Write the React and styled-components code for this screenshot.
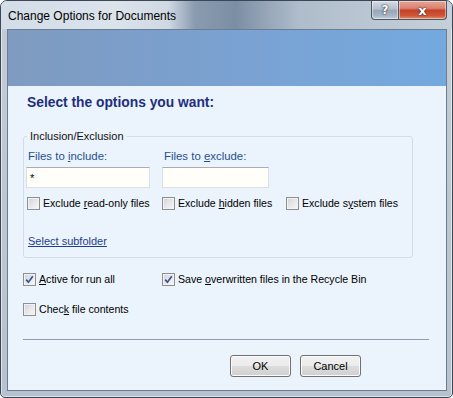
import React from 'react'
import styled, { createGlobalStyle } from 'styled-components'

const GlobalStyle = createGlobalStyle`
  html, body {
    margin: 0;
    padding: 0;
    background: #ffffff;
  }
  body {
    font-family: "Liberation Sans", Arial, sans-serif;
    font-size: 11px;
    color: #000;
  }
`

const Window = styled.div`
  box-sizing: border-box;
  width: 453px;
  height: 398px;
  display: flex;
  flex-direction: column;
  border: 1px solid #3b4756;
  border-radius: 7px 7px 5px 5px;
  background: linear-gradient(180deg, #c3ccd6 0%, #b7c2ce 100%);
  box-shadow: inset 0 0 0 1px rgba(255, 255, 255, 0.55);
  overflow: hidden;
`

const TitleBar = styled.div`
  height: 28px;
  display: flex;
  align-items: flex-start;
  padding: 0 5px 0 7px;
  background: linear-gradient(
    90deg,
    #d3dde7 0%,
    #dbe3eb 25%,
    #d0d9e3 37%,
    #8a9bb0 43%,
    #7c8ea4 52%,
    #93a3b6 58%,
    #aebccb 66%,
    #b8c4d1 78%,
    #c6d0db 100%
  );
`

const Title = styled.div`
  padding-top: 8px;
  font-size: 12px;
  line-height: 14px;
  color: #000;
`

const Controls = styled.div`
  margin-left: auto;
  display: flex;
`

const CaptionButton = styled.div`
  box-sizing: border-box;
  height: 19px;
  width: ${p => p.$w}px;
  display: flex;
  align-items: center;
  justify-content: center;
  border: 1px solid #4b5665;
  border-top: none;
  font-family: "DejaVu Sans", sans-serif;
  font-weight: bold;
  color: #fff;
  font-size: ${p => (p.$close ? 13 : 12)}px;
  text-shadow: 0 0 2px #2a2a2a, 0 0 1px #2a2a2a;
  border-radius: ${p => (p.$close ? '0 0 4px 0' : '0 0 0 4px')};
  background: ${p =>
    p.$close
      ? 'linear-gradient(180deg, #e6a597 0%, #d9826f 40%, #c5402a 52%, #cf5436 80%, #e08a63 100%)'
      : 'linear-gradient(180deg, #d6dde6 0%, #b3bfcc 45%, #96a6b9 52%, #a6b4c4 80%, #c3ced9 100%)'};
  box-shadow: inset 0 0 0 1px rgba(255, 255, 255, 0.45);
  & + & {
    border-left: none;
  }
`

const Client = styled.div`
  flex: 1;
  margin: 0 5px 6px 6px;
  border: 1px solid #6c7d91;
  background: #ebf3fc;
  display: flex;
  flex-direction: column;
`

const Banner = styled.div`
  height: 56px;
  background: linear-gradient(90deg, #7f9bbf 0%, #7b9fcc 35%, #79a4d6 65%, #73a9df 100%);
`

const Body = styled.div`
  flex: 1;
  display: flex;
  flex-direction: column;
  padding: 9px 16px 0 15px;
`

const Heading = styled.h1`
  margin: 0 0 0 4px;
  font-size: 13.8px;
  line-height: 16px;
  font-weight: bold;
  color: #1d2f7d;
`

const GroupBox = styled.fieldset`
  box-sizing: border-box;
  width: 390px;
  margin: 18px 0 0 0;
  padding: 0 6px 9px 2px;
  border: 1px solid #d2dce7;
  border-radius: 3px;
`

const Legend = styled.legend`
  margin-left: 1px;
  padding: 0 3px;
  font-size: 11px;
  line-height: 14px;
  color: #111;
`

const FieldsRow = styled.div`
  display: grid;
  grid-template-columns: 136px 124px;
  margin-top: 6px;
`

const Field = styled.div`
  display: flex;
  flex-direction: column;
  gap: 4px;
`

const FieldLabel = styled.label`
  padding-left: 2px;
  font-size: 11.4px;
  line-height: 14px;
  color: #24508f;
`

const TextBox = styled.div`
  box-sizing: border-box;
  width: ${p => p.$w}px;
  height: 21px;
  padding: 3px 3px;
  border: 1px solid #dbdfe6;
  border-top-color: #abadb3;
  background: #fffef9;
  line-height: 14px;
  color: #000;
`

const CheckRow = styled.div`
  display: grid;
  grid-template-columns: ${p => p.$cols};
  margin-top: ${p => p.$mt}px;
`

const Check = styled.label`
  display: flex;
  align-items: center;
  gap: 3px;
  font-size: 10.6px;
  line-height: 14px;
  padding-left: ${p => p.$pl || 0}px;
`

const Box = styled.span`
  box-sizing: border-box;
  width: 13px;
  height: 13px;
  flex: none;
  display: flex;
  align-items: center;
  justify-content: center;
  border: 1px solid #8e8f8f;
  background: linear-gradient(135deg, #cfd2d6 0%, #e6e7e9 50%, #f8f8f8 100%);
  box-shadow: inset 0 0 0 1px #f2f2f2;
`

const Key = styled.span`
  text-decoration: underline;
`

const Link = styled.a`
  display: block;
  margin-top: 24px;
  padding-left: 2px;
  font-size: 11px;
  line-height: 14px;
  color: #1f3e8c;
  text-decoration: underline;
`

const Separator = styled.div`
  width: 406px;
  height: 1px;
  margin-top: 23px;
  background: #8f9eb0;
`

const ButtonRow = styled.div`
  display: flex;
  justify-content: flex-end;
  gap: 9px;
  width: 406px;
  padding-right: 68px;
  box-sizing: border-box;
  margin-top: 15px;
`

const Button = styled.button`
  box-sizing: border-box;
  width: 61px;
  height: 22px;
  padding: 0;
  border: 1px solid #707070;
  border-radius: 3px;
  background: linear-gradient(180deg, #f2f2f2 0%, #ebebeb 48%, #dddddd 52%, #cfcfcf 100%);
  box-shadow: inset 0 0 0 1px #fbfbfb;
  font-family: "Liberation Sans", Arial, sans-serif;
  font-size: 11px;
  color: #000;
`

function Checkbox({ checked, children, pl }) {
  return (
    <Check $pl={pl}>
      <Box>
        {checked && (
          <svg width="9" height="9" viewBox="0 0 9 9">
            <path d="M1.2 4.6 L3.4 7.2 L7.8 1.2" fill="none" stroke="#3a539a" strokeWidth="1.7" />
          </svg>
        )}
      </Box>
      <span>{children}</span>
    </Check>
  )
}

function App() {
  return (
    <>
      <GlobalStyle />
      <Window>
        <TitleBar>
          <Title>Change Options for Documents</Title>
          <Controls>
            <CaptionButton $w={28}>?</CaptionButton>
            <CaptionButton $w={48} $close>x</CaptionButton>
          </Controls>
        </TitleBar>
        <Client>
          <Banner />
          <Body>
            <Heading>Select the options you want:</Heading>
            <GroupBox>
              <Legend>Inclusion/Exclusion</Legend>
              <FieldsRow>
                <Field>
                  <FieldLabel>Files to <Key>i</Key>nclude:</FieldLabel>
                  <TextBox $w={124}>*</TextBox>
                </Field>
                <Field>
                  <FieldLabel>Files to <Key>e</Key>xclude:</FieldLabel>
                  <TextBox $w={107} />
                </Field>
              </FieldsRow>
              <CheckRow $cols="136px 124px 1fr" $mt={8}>
                <Checkbox pl={1}>Exclude <Key>r</Key>ead-only files</Checkbox>
                <Checkbox>Exclude <Key>h</Key>idden files</Checkbox>
                <Checkbox>Exclude s<Key>y</Key>stem files</Checkbox>
              </CheckRow>
              <Link>Select subfolder</Link>
            </GroupBox>
            <CheckRow $cols="139px 1fr" $mt={14}>
              <Checkbox checked pl={0}><Key>A</Key>ctive for run all</Checkbox>
              <Checkbox checked>Save <Key>o</Key>verwritten files in the Recycle Bin</Checkbox>
            </CheckRow>
            <CheckRow $cols="1fr" $mt={16}>
              <Checkbox>Chec<Key>k</Key> file contents</Checkbox>
            </CheckRow>
            <Separator />
            <ButtonRow>
              <Button>OK</Button>
              <Button>Cancel</Button>
            </ButtonRow>
          </Body>
        </Client>
      </Window>
    </>
  )
}

export default App
